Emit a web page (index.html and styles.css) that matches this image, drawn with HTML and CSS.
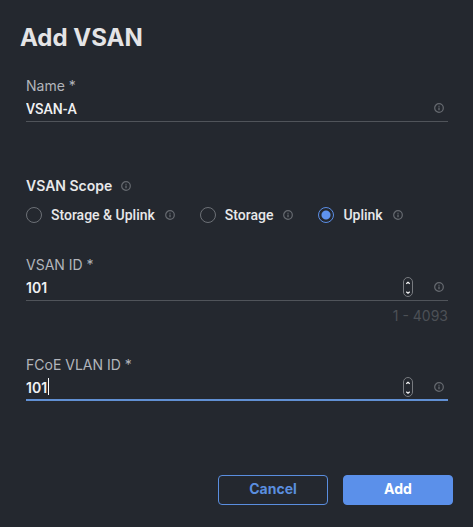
FILE: index.html
```html
<!DOCTYPE html>
<html lang="en">
<head>
    <meta charset="UTF-8">
    <meta name="viewport" content="width=device-width, initial-scale=1.0">
    <title>Add VSAN</title>
    <link rel="stylesheet" href="styles.css">
</head>
<body>
    <svg width="0" height="0" class="defs" aria-hidden="true">
        <symbol id="info" viewBox="0 0 10 10">
            <circle cx="5" cy="5" r="4.3" fill="none" stroke="currentColor" stroke-width="1.2"/>
            <path d="M5 2.8v1M5 4.4v2.8" fill="none" stroke="currentColor" stroke-width="1.3"/>
        </symbol>
    </svg>

    <form class="dialog">
        <h1>Add VSAN</h1>

        <div class="fields">
            <div class="form-group">
                <label for="name">Name *</label>
                <div class="control">
                    <input type="text" id="name" class="narrow" value="VSAN-A">
                    <svg class="info"><use href="#info"/></svg>
                </div>
            </div>

            <fieldset class="scope">
                <legend>VSAN Scope <svg class="info"><use href="#info"/></svg></legend>
                <div class="options">
                    <div class="option">
                        <input type="radio" name="scope" id="both">
                        <label for="both">Storage &amp; Uplink</label>
                        <svg class="info"><use href="#info"/></svg>
                    </div>
                    <div class="option">
                        <input type="radio" name="scope" id="storage">
                        <label for="storage">Storage</label>
                        <svg class="info"><use href="#info"/></svg>
                    </div>
                    <div class="option">
                        <input type="radio" name="scope" id="uplink" checked>
                        <label for="uplink">Uplink</label>
                        <svg class="info"><use href="#info"/></svg>
                    </div>
                </div>
            </fieldset>

            <div class="form-group">
                <label for="vsanId">VSAN ID *</label>
                <div class="control">
                    <input type="text" inputmode="numeric" id="vsanId" value="101">
                    <div class="stepper">
                        <button type="button" aria-label="Increase VSAN ID"><svg viewBox="0 0 8 9"><path d="M2.3 5.7L4 4.3L5.7 5.7"/></svg></button>
                        <button type="button" aria-label="Decrease VSAN ID"><svg viewBox="0 0 8 9"><path d="M2.3 4.8L4 6.2L5.7 4.8"/></svg></button>
                    </div>
                    <svg class="info"><use href="#info"/></svg>
                </div>
                <div class="hint">1 - 4093</div>
            </div>

            <div class="form-group">
                <label for="vlanId">FCoE VLAN ID *</label>
                <div class="control active">
                    <input type="text" inputmode="numeric" id="vlanId" value="101">
                    <span class="caret"></span>
                    <div class="stepper">
                        <button type="button" aria-label="Increase FCoE VLAN ID"><svg viewBox="0 0 8 9"><path d="M2.3 5.7L4 4.3L5.7 5.7"/></svg></button>
                        <button type="button" aria-label="Decrease FCoE VLAN ID"><svg viewBox="0 0 8 9"><path d="M2.3 4.8L4 6.2L5.7 4.8"/></svg></button>
                    </div>
                    <svg class="info"><use href="#info"/></svg>
                </div>
            </div>
        </div>

        <div class="actions">
            <button type="button" class="btn">Cancel</button>
            <button type="submit" class="btn primary">Add</button>
        </div>
    </form>
</body>
</html>
```
FILE: styles.css
```css
* {
    box-sizing: border-box;
}
body {
    margin: 0;
    background-color: #24282f;
    color: #e8e8ea;
    font-family: Inter, Arial, sans-serif;
    font-size: 14px;
    line-height: 20px;
}
.defs {
    display: block;
}
.dialog {
    padding: 23px 20px;
}
h1 {
    margin: 0 0 23px;
    font-size: 24px;
    line-height: 30px;
    font-weight: 700;
    color: #e4e4e6;
}
.fields {
    padding: 0 5px 0 6px;
}
.form-group {
    height: 100px;
}
.form-group label {
    display: block;
    color: #b2b5bb;
}
.control {
    display: flex;
    align-items: center;
    height: 26px;
    padding: 0 4px 2px 0;
    border-bottom: 1px solid #50545a;
}
.control.active {
    padding-bottom: 1px;
    border-bottom: 2px solid #6190d4;
}
.control input {
    flex: 1;
    min-width: 0;
    padding: 2px 0 0;
    border: none;
    outline: none;
    background: none;
    color: #f0f0f2;
    font: 600 14px/20px Inter, Arial, sans-serif;
}
.control .narrow {
    font: 500 14px/20px Roboto, Arial, sans-serif;
}
.control.active input {
    flex: none;
    field-sizing: content;
}
.caret {
    width: 1px;
    height: 17px;
    margin-left: 1px;
    margin-right: auto;
    background-color: #fff;
}
.stepper {
    display: flex;
    flex-direction: column;
    width: 10px;
    height: 20px;
    margin-right: 21px;
    border: 1px solid #787b80;
    border-radius: 5px;
}
.stepper button {
    width: 8px;
    height: 9px;
    padding: 0;
    border: none;
    background: none;
    cursor: pointer;
}
.stepper svg {
    display: block;
    fill: none;
    stroke: #fff;
    stroke-width: 1.2;
}
.info {
    flex: none;
    width: 10px;
    height: 10px;
    color: #666a70;
}
.hint {
    margin-top: 5px;
    text-align: right;
    color: #4c5056;
}
.scope {
    min-width: 0;
    height: 79px;
    margin: 0;
    padding: 0;
    border: none;
}
.scope legend {
    display: flex;
    align-items: center;
    gap: 9px;
    padding: 0;
    font-weight: 600;
}
.options {
    display: flex;
    flex-wrap: wrap;
    gap: 25px;
    padding-top: 9px;
}
.option {
    display: flex;
    align-items: center;
}
.option label {
    margin: 0 10px 0 9px;
    font: 500 14px/20px Roboto, Arial, sans-serif;
}
.option input {
    appearance: none;
    width: 16px;
    height: 16px;
    margin: 0;
    border: 1px solid #6c7076;
    border-radius: 50%;
}
.option input:checked {
    border-color: #5b8ee6;
    background: radial-gradient(circle, #5f93ee 4px, transparent 5px);
}
.actions {
    display: flex;
    justify-content: flex-end;
    gap: 15px;
    margin-top: 20px;
}
.btn {
    width: 110px;
    height: 30px;
    padding: 0 0 2px;
    border: 1px solid #5a8edf;
    border-radius: 4px;
    background: none;
    color: #5a8edf;
    font: 700 14px/20px Inter, Arial, sans-serif;
    cursor: pointer;
}
.btn.primary {
    border-color: #5b90ea;
    background-color: #5b90ea;
    color: #fff;
}
```
